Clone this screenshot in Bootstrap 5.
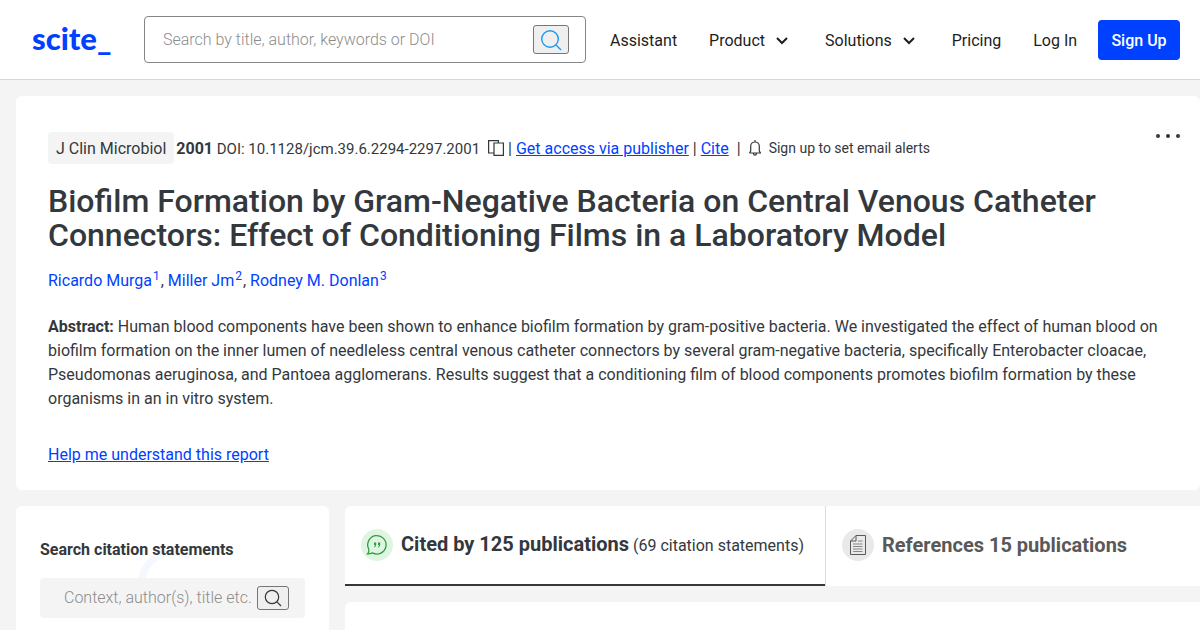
<!DOCTYPE html>
<html lang="en">
<head>
<meta charset="utf-8">
<meta name="viewport" content="width=device-width, initial-scale=1">
<title>Biofilm Formation by Gram-Negative Bacteria - scite</title>
<link href="https://cdn.jsdelivr.net/npm/bootstrap@5.3.0/dist/css/bootstrap.min.css" rel="stylesheet">
<style>
body{font-family:Roboto,"Liberation Sans",sans-serif;font-size:16px;line-height:24px;color:#33383d;background:#f4f4f4;overflow-x:hidden}
a{color:#0041ff}
.site-header{background:#fff;border-bottom:1px solid #d6d6d6;height:80px;padding:0 20px 0 32px}
.brand-word{font-family:Lato,sans-serif;font-weight:900;font-size:31px;line-height:32px;color:#0041ff;text-decoration:none;width:112px;padding-bottom:4px}
.search-box{flex:0 1 442px;height:47px;border:1px solid #858585;border-radius:4px;padding:0 16px 0 18px}
.search-box input,.side-search input{border:0;background:transparent;outline:0;min-width:0;padding:0;font-weight:300;color:#33383d}
.search-box input::placeholder,.side-search input::placeholder{color:#8c8c8c;opacity:1}
.icon-btn{background:#efefef;border:1px solid #767676;border-radius:3px;padding:0;display:flex;align-items:center;justify-content:center;flex:none}
.search-box .icon-btn{width:36px;height:29px}
.side-search .icon-btn{width:32px;height:24px}
.main-links{gap:32px;margin-left:24px;padding-top:2px}
.main-links a,.main-links .menu-btn{color:#1d1d1d;text-decoration:none;background:none;border:0;padding:0;white-space:nowrap}
.menu-btn svg{margin:0 4px 0 10px}
.btn-signup,.btn-signup:hover{background:#0041ff;color:#fff}
.btn-signup{font-weight:500;width:82px;height:40px;border-radius:4px;padding:2px 0 0}
.panel{background:#fff;border-radius:6px}
.paper{padding:36px 32px 23px}
.meta-row>span{padding-top:2px}
.meta-row>.journal{background:#f4f4f4;border-radius:4px;padding:5px 8px 3px;margin-right:2px}
.doi{font-size:15px}
.paper h1{font-size:32px;line-height:34px;font-weight:500;margin:20px 0 17px}
.authors a{text-decoration:none}
.authors sup{font-size:12px;padding:0 1px}
.abstract{margin:22px 0 0}
.alerts{font-size:14px;background:none;border:0;padding:0;color:#33383d}
.more-btn{position:absolute;right:16px;top:28px;background:none;border:0;padding:4px}
.side{width:313px;flex:none;padding:32px 24px}
.side h2{font-size:16px;line-height:24px;font-weight:700;margin-bottom:16px}
.side-search{background:#f4f4f4;border-radius:4px;height:40px;padding:0 16px 0 24px;position:relative}
.swoosh{position:absolute;left:122px;top:45px}
.tab-strip{height:80px;border-radius:6px 0 0 0;overflow:hidden}
.tab-btn{background:#fff;border:0;height:80px;padding:0 16px 2px;gap:8px;white-space:nowrap;color:#33383d}
.tab-btn strong{font-size:20px;font-weight:700}
.tab-active{width:480px;flex:none;border-bottom:2px solid #33383d;padding-bottom:0}
.tab-other{border-left:1px solid #dcdcdc;color:#595959;flex:1}
.results{height:200px;border-radius:6px 0 0 0}
</style>
</head>
<body>
<header class="site-header d-flex align-items-center">
  <a href="#" class="brand-word flex-shrink-0">scite_</a>
  <form class="search-box d-flex align-items-center" role="search">
    <input class="flex-grow-1" type="text" aria-label="Search papers" placeholder="Search by title, author, keywords or DOI">
    <button class="icon-btn" type="button" aria-label="Search"><svg width="22" height="22" viewBox="0 0 22 22" fill="none" stroke="#1b9cf2" stroke-width="1.4"><circle cx="10" cy="10" r="8.3"/><path d="M15.8 15.8 21 21"/></svg></button>
  </form>
  <nav class="main-links d-flex align-items-center flex-grow-1">
    <a href="#">Assistant</a>
    <button class="menu-btn" type="button">Product<svg width="14" height="10" viewBox="0 0 14 10" fill="none" stroke="#1d1d1d" stroke-width="2"><path d="M2 2l5 5 5-5"/></svg></button>
    <button class="menu-btn" type="button">Solutions<svg width="14" height="10" viewBox="0 0 14 10" fill="none" stroke="#1d1d1d" stroke-width="2"><path d="M2 2l5 5 5-5"/></svg></button>
    <a href="#">Pricing</a>
    <a href="#">Log In</a>
  </nav>
  <button class="btn btn-signup flex-shrink-0" type="button">Sign Up</button>
</header>
<main class="ps-3 pt-3">
  <article class="panel paper position-relative">
    <button class="more-btn" type="button" aria-label="More"><svg class="d-block" width="24" height="16" viewBox="0 0 24 16" fill="#33383d"><circle cx="2" cy="8" r="2"/><circle cx="12" cy="8" r="2"/><circle cx="22" cy="8" r="2"/></svg></button>
    <div class="meta-row d-flex align-items-center text-nowrap">
      <span class="journal">J Clin Microbiol</span>
      <span><b>2001</b><span class="doi"> DOI: 10.1128/jcm.39.6.2294-2297.2001</span></span>
      <svg class="ms-2" width="16" height="16" viewBox="0 0 16 16" fill="none" stroke="#33383d" stroke-width="1.2"><path d="M6 13H.6V.6h9.800V3"/><path d="M6 3h9.400v12.400H6z"/></svg>
      <span class="ms-1">| <a href="#">Get access via publisher</a> | <a href="#">Cite</a></span>
      <span class="mx-2">|</span>
      <button class="alerts d-flex align-items-center" type="button"><svg class="me-2" width="12" height="16" viewBox="0 0 12 16" fill="none" stroke="#33383d" stroke-width="1.2"><path d="M6 0v2M.4 13h11.200L10.300 11V6.300a4.300 4.300 0 0 0-8.600 0V11L.4 13M4.500 13.200a1.500 2 0 0 0 3 0"/></svg>Sign up to set email alerts</button>
    </div>
    <h1>Biofilm Formation by Gram-Negative Bacteria on Central Venous Catheter Connectors: Effect of Conditioning Films in a Laboratory Model</h1>
    <p class="authors mb-0"><a href="#">Ricardo Murga<sup>1</sup></a>, <a href="#">Miller Jm<sup>2</sup></a>, <a href="#">Rodney M. Donlan<sup>3</sup></a></p>
    <p class="abstract"><b>Abstract:</b> Human blood components have been shown to enhance biofilm formation by gram-positive bacteria. We investigated the effect of human blood on biofilm formation on the inner lumen of needleless central venous catheter connectors by several gram-negative bacteria, specifically Enterobacter cloacae, Pseudomonas aeruginosa, and Pantoea agglomerans. Results suggest that a conditioning film of blood components promotes biofilm formation by these organisms in an in vitro system.</p>
    <p class="mb-0 pt-3 mt-3"><a href="#">Help me understand this report</a></p>
  </article>
  <div class="d-flex gap-3 mt-3">
    <aside class="panel side position-relative">
      <svg class="swoosh" width="54" height="40" viewBox="0 0 54 40" fill="none" stroke="#f5f8ff" stroke-width="7"><path d="M4 40A32 32 0 0 1 52 6"/></svg>
      <h2 class="position-relative">Search citation statements</h2>
      <form class="side-search d-flex align-items-center">
        <input class="flex-grow-1" type="text" aria-label="Search citation statements" placeholder="Context, author(s), title etc.">
        <button class="icon-btn" type="button" aria-label="Search"><svg width="18" height="18" viewBox="0 0 18 18" fill="none" stroke="#33383d" stroke-width="1.2"><circle cx="8" cy="8" r="6.700"/><path d="M12.700 12.700 17 17"/></svg></button>
      </form>
    </aside>
    <section class="flex-grow-1">
      <div class="tab-strip d-flex">
        <button class="tab-btn tab-active d-flex align-items-center" type="button">
          <svg width="32" height="32" viewBox="0 0 32 32" fill="none"><circle cx="16" cy="16" r="16" fill="#dff5e1"/><path d="M6.600 24.800Q8.300 23 7.700 20A9.200 9.200 0 1 1 11.500 23.900Q9 24.800 6.600 24.800z" stroke="#2e9e45" stroke-width="1.300"/><path d="M13 13.500h2.200v2.300q0 1.700-1.700 2.700l-.4-.6q.8-.7.800-1.800H13zM17 13.500h2.200v2.300q0 1.700-1.700 2.700l-.4-.6q.8-.7.800-1.800H17z" fill="#2e9e45"/></svg>
          <span><strong>Cited by 125 publications</strong> (69 citation statements)</span>
        </button>
        <button class="tab-btn tab-other d-flex align-items-center" type="button">
          <svg width="32" height="32" viewBox="0 0 32 32" fill="none"><circle cx="16" cy="16" r="16" fill="#e9e9e9"/><path d="M8.500 12 14 6.500h9.500v19h-15zM8.500 12H14V6.500" stroke="#595959"/><path d="M16 12h4.500M11 15h9.500M11 17.500h9.500M11 20h9.500M11 22.500h9.500" stroke="#888"/></svg>
          <strong>References 15 publications</strong>
        </button>
      </div>
      <div class="panel results mt-3"></div>
    </section>
  </div>
</main>
<script src="https://cdn.jsdelivr.net/npm/bootstrap@5.3.0/dist/js/bootstrap.bundle.min.js"></script>
</body>
</html>
